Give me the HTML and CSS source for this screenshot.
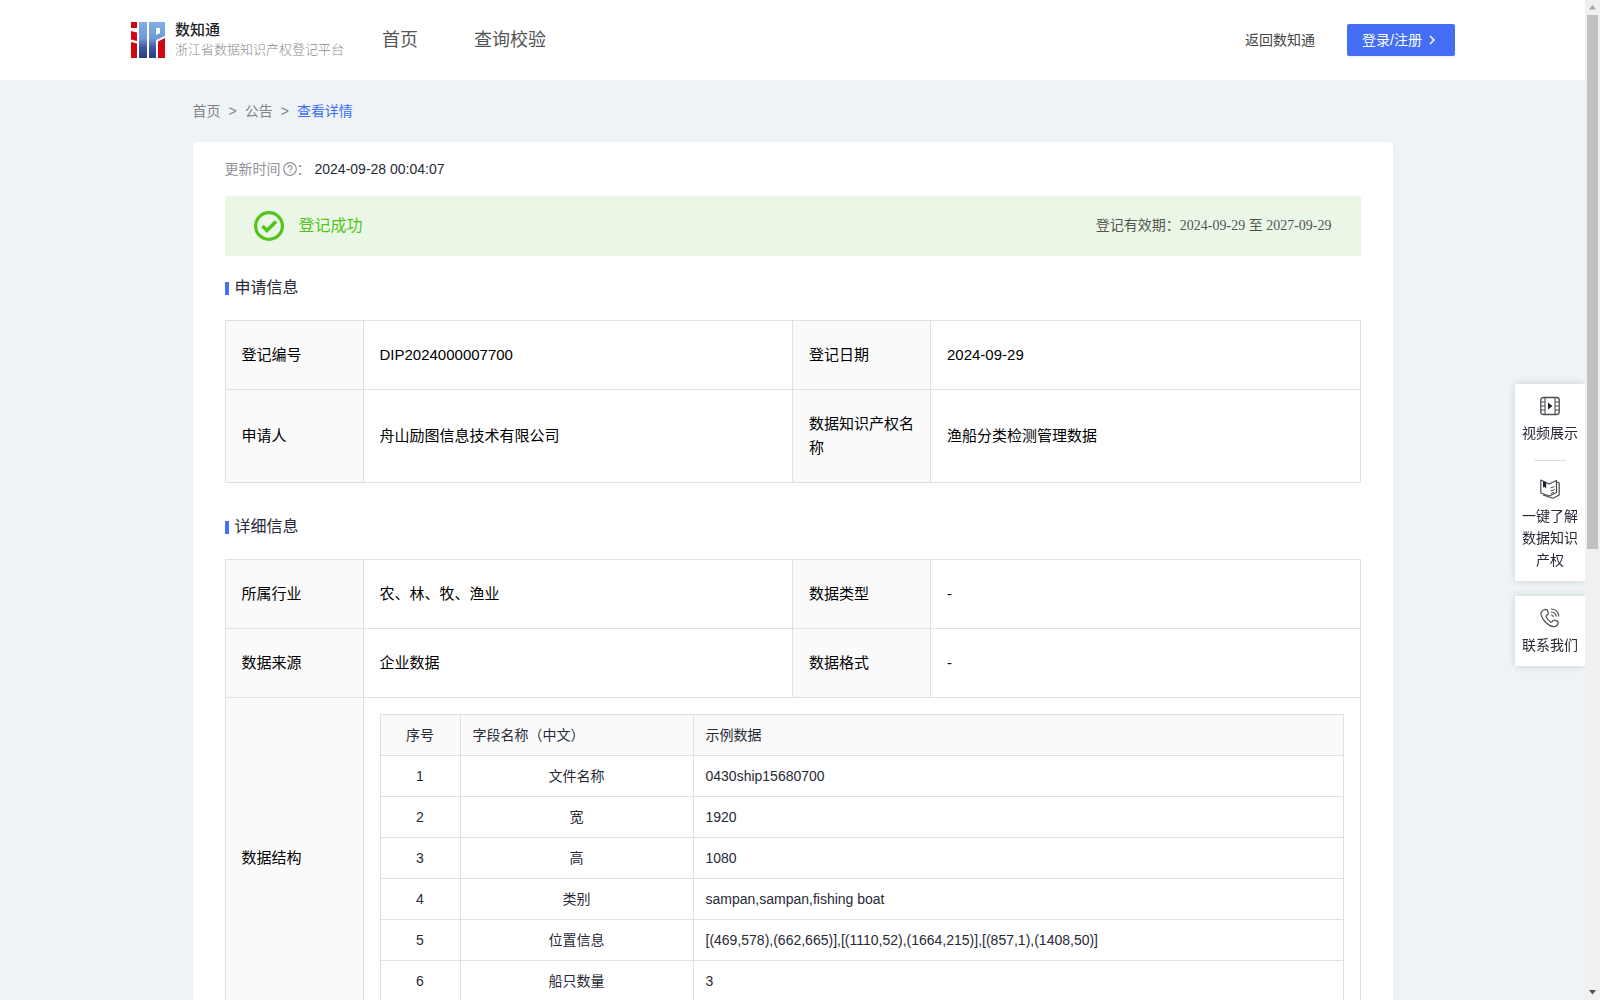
FILE: index.html
```html
<!DOCTYPE html>
<html lang="zh-CN">
<head>
<meta charset="utf-8">
<title>查看详情 - 数知通</title>
<link rel="stylesheet" href="styles.css">
</head>
<body>
<div class="page">
  <header class="header">
    <a class="brand" href="#">
      <svg class="brand-logo" width="34" height="36" viewBox="0 0 34 36" aria-hidden="true">
        <defs>
          <linearGradient id="sky" gradientUnits="userSpaceOnUse" x1="0" y1="0" x2="0" y2="36">
            <stop offset="0" stop-color="#7fb0e6"/>
            <stop offset=".45" stop-color="#6f9bd8"/>
            <stop offset=".7" stop-color="#3f5ba6"/>
            <stop offset="1" stop-color="#283a86"/>
          </linearGradient>
        </defs>
        <path fill="#d00610" d="M0 0h6v6H0zM0 9l6 1.500V19L0 17.500zM0 20l6 1.500V36H0z"/>
        <path fill="url(#sky)" d="M8 0h8v36H8z"/>
        <path fill="url(#sky)" d="M18 0h16v14l-9 4v18h-7zM25 6v7l4-2V6z" fill-rule="evenodd"/>
        <path fill="#d00610" d="M27 19.500L34 16v20h-7z"/>
      </svg>
      <span class="brand-text">
        <strong class="brand-name">数知通</strong>
        <span class="brand-sub">浙江省数据知识产权登记平台</span>
      </span>
    </a>
    <nav class="nav">
      <a href="#">首页</a>
      <a href="#">查询校验</a>
    </nav>
    <div class="header-actions">
      <a class="back-link" href="#">返回数知通</a>
      <button class="login" type="button">登录/注册
        <svg width="8" height="10" viewBox="0 0 8 10" aria-hidden="true"><path d="M2 1l4 4-4 4" fill="none" stroke="#fff" stroke-width="1.500"/></svg>
      </button>
    </div>
  </header>

  <main class="main">
    <nav class="crumbs" aria-label="面包屑">
      <a href="#">首页</a><span>&gt;</span><a href="#">公告</a><span>&gt;</span><a class="current" href="#">查看详情</a>
    </nav>

    <article class="card">
      <div class="updated">
        <span class="muted">更新时间</span>
        <svg width="14" height="14" viewBox="0 0 14 14" aria-hidden="true"><g fill="none" stroke="#909399"><circle cx="7" cy="7" r="6.300" stroke-width="1.200"/><path d="M5 5.700a2 1.900 0 1 1 3 1.500q-1 .5-1 1.300" stroke-width="1.200"/></g><circle cx="7" cy="10.200" r=".8" fill="#909399"/></svg>
        <span class="muted colon">：</span>
        <time>2024-09-28 00:04:07</time>
      </div>

      <div class="banner">
        <svg width="30" height="30" viewBox="0 0 30 30" aria-hidden="true"><g fill="none" stroke="#52c41a"><circle cx="15" cy="15" r="13.400" stroke-width="3.200"/><path d="M8.500 15l4.500 4.500 9-9" stroke-width="3.600"/></g></svg>
        <span class="banner-status">登记成功</span>
        <span class="banner-period">登记有效期：2024-09-29 至 2027-09-29</span>
      </div>

      <section>
        <h2 class="section-title">申请信息</h2>
        <table class="info">
          <colgroup><col class="col-label"><col><col class="col-label"><col></colgroup>
          <tbody>
            <tr><th scope="row">登记编号</th><td>DIP2024000007700</td><th scope="row">登记日期</th><td>2024-09-29</td></tr>
            <tr><th scope="row">申请人</th><td>舟山励图信息技术有限公司</td><th scope="row">数据知识产权名称</th><td>渔船分类检测管理数据</td></tr>
          </tbody>
        </table>
      </section>

      <section class="section-next">
        <h2 class="section-title">详细信息</h2>
        <table class="info">
          <colgroup><col class="col-label"><col><col class="col-label"><col></colgroup>
          <tbody>
            <tr><th scope="row">所属行业</th><td>农、林、牧、渔业</td><th scope="row">数据类型</th><td>-</td></tr>
            <tr><th scope="row">数据来源</th><td>企业数据</td><th scope="row">数据格式</th><td>-</td></tr>
            <tr>
              <th scope="row">数据结构</th>
              <td class="nested" colspan="3">
                <table class="fields">
                  <colgroup><col class="col-index"><col class="col-name"><col></colgroup>
                  <thead>
                    <tr><th class="center" scope="col">序号</th><th scope="col">字段名称（中文）</th><th scope="col">示例数据</th></tr>
                  </thead>
                  <tbody>
                    <tr><td class="center">1</td><td class="center">文件名称</td><td>0430ship15680700</td></tr>
                    <tr><td class="center">2</td><td class="center">宽</td><td>1920</td></tr>
                    <tr><td class="center">3</td><td class="center">高</td><td>1080</td></tr>
                    <tr><td class="center">4</td><td class="center">类别</td><td>sampan,sampan,fishing boat</td></tr>
                    <tr><td class="center">5</td><td class="center">位置信息</td><td>[(469,578),(662,665)],[(1110,52),(1664,215)],[(857,1),(1408,50)]</td></tr>
                    <tr><td class="center">6</td><td class="center">船只数量</td><td>3</td></tr>
                  </tbody>
                </table>
              </td>
            </tr>
          </tbody>
        </table>
      </section>
    </article>
  </main>
</div>

<aside class="side">
  <div class="side-box">
    <a class="side-item" href="#">
      <svg width="20" height="20" viewBox="0 0 20 20" fill="none" stroke="#4a4c55" aria-hidden="true"><rect x=".8" y="1.500" width="18.400" height="17" rx="2.500" stroke-width="1.300"/><path d="M5 1.500v17M15 1.500v17M1 6h4M1 10h4M1 14h4M15 6h4M15 10h4M15 14h4" stroke-width="1.100"/><path d="M8 6.500v7l4.500-3.500z" fill="#20222c" stroke="none"/></svg>
      视频展示
    </a>
    <hr class="side-rule">
    <a class="side-item" href="#">
      <svg width="20" height="20" viewBox="0 0 20 20" fill="none" stroke="#4a4c55" stroke-width="1.200" stroke-linejoin="round" aria-hidden="true"><path d="M.8 1l8.200 4 7.500-3.500v12L9.500 17 .8 14z"/><path d="M17 3l2.200 1v12L13 19.200 3 16"/><path d="M10.500 9l4-1.500M10.500 12l4-1.500M11 14.500l3-1.200" stroke-width="1"/><path d="M3 2l3.200 1.500v6L4.600 8 3 8.400z" fill="#20222c" stroke="none"/></svg>
      一键了解数据知识产权
    </a>
  </div>
  <div class="side-box">
    <a class="side-item" href="#">
      <svg width="20" height="20" viewBox="0 0 20 20" fill="none" stroke="#4a4c55" stroke-width="1.200" stroke-linecap="round" stroke-linejoin="round" aria-hidden="true"><path d="M3.500 2L6 1.300q1.300 0 1.700 1.500l.5 2.400q.1 1-.8 1.600l-1 .8q-.6.600-.1 1.600 1.500 3 4.400 4.700.9.500 1.500-.3l1-1.200q.6-.6 1.500-.3l2.400 1q1.300.7.900 2.200-.6 2.800-3.500 3.300Q10 19 5 13.500.5 8.500 1 4.800 1.500 2.700 3.500 2z"/><path d="M11.500 1q6.500.4 7.300 7M11.500 4q4 .3 4.700 4.200M11.500 7q1.500.2 1.800 1.600"/></svg>
      联系我们
    </a>
  </div>
</aside>

<div class="scrollbar" aria-hidden="true">
  <svg width="7" height="5" viewBox="0 0 7 5"><path d="M0 4.500L3.500 0 7 4.500z" fill="#a3a3a3"/></svg>
  <div class="scroll-track"><div class="scroll-thumb"></div></div>
  <svg width="7" height="5" viewBox="0 0 7 5"><path d="M0 0h7L3.500 4.500z" fill="#505050"/></svg>
</div>
</body>
</html>
```
FILE: styles.css
```css
* { box-sizing: border-box; }

body {
  margin: 0;
  height: 100vh;
  display: flex;
  overflow: hidden;
  background: #eef3f6;
  color: #272a36;
  font: 14px/22px "Liberation Sans", "Noto Sans CJK SC", sans-serif;
}

a { color: inherit; text-decoration: none; }
svg { display: block; flex: none; }

.page {
  flex: 1;
  min-width: 0;
  overflow-y: auto;
  scrollbar-width: none;
}

/* Header */
.header {
  display: flex;
  align-items: center;
  height: 80px;
  padding: 0 130px 0 131px;
  background: #fff;
}
.brand { display: flex; align-items: center; gap: 10px; }
.brand-text { display: flex; flex-direction: column; }
.brand-name { font-size: 15px; line-height: 20px; font-weight: 500; color: #222; }
.brand-sub { font-size: 13px; line-height: 20px; font-weight: 300; color: #8c8c8c; }
.nav { display: flex; gap: 56px; margin-left: 38px; font-size: 18px; color: #555; }
.header-actions { display: flex; align-items: center; gap: 32px; margin-left: auto; color: #444; }
.login {
  display: flex;
  align-items: center;
  gap: 6px;
  height: 32px;
  padding: 0 19px 0 15px;
  border: 0;
  border-radius: 2px;
  background: #446ef4;
  box-shadow: 0 2px 0 rgba(0, 0, 0, .04);
  color: #fff;
  font: inherit;
}

/* Content */
.main { max-width: 1200px; margin: 0 auto; padding-bottom: 40px; }
.crumbs { display: flex; gap: 8px; padding: 20px 0; color: #808388; }
.crumbs .current { color: #3f6df5; }

.card { padding: 16px 32px 32px; border-radius: 4px; background: #fff; }
.updated { display: flex; align-items: center; height: 22px; }
.updated svg { margin-left: 2px; }
.muted { color: #909399; }
.colon { width: 18px; }

.banner {
  display: flex;
  align-items: center;
  height: 60px;
  margin: 16px 0 20px;
  padding: 0 29px;
  background: #ebf7e6;
}
.banner-status { margin-left: 15px; font-size: 16px; color: #52c41a; }
.banner-period { margin-left: auto; color: #555; font-family: "Liberation Serif", "Noto Sans CJK SC", serif; }

.section-next { margin-top: 32px; }
.section-title {
  display: flex;
  align-items: center;
  gap: 6px;
  margin: 0 0 20px;
  font-size: 16px;
  line-height: 24px;
  font-weight: 400;
}
.section-title::before { content: ""; width: 4px; height: 13px; background: #446ef4; }

table { width: 100%; border-collapse: collapse; table-layout: fixed; }
th, td { border: 1px solid #e0e0e0; text-align: left; font-weight: 400; }
th { background: #fafafa; }
.info { color: #000; font-size: 15px; line-height: 24px; }
.info th, .info td { padding: 22px 16px; }
.info .nested { padding: 16px; }
.col-label { width: 138px; }

.fields { color: #272a36; font-size: 14px; line-height: 24px; }
.info .fields th, .info .fields td { padding: 8px 12px; }
.info .fields .center { text-align: center; }
.col-index { width: 80px; }
.col-name { width: 233px; }

/* Floating shortcuts */
.side {
  position: fixed;
  top: 384px;
  right: 15px;
  width: 70px;
  display: flex;
  flex-direction: column;
  gap: 15px;
}
.side-box { padding: 12px 7px 10px; background: #fff; box-shadow: 0 0 8px rgba(0, 0, 0, .14); }
.side-item { display: flex; flex-direction: column; align-items: center; gap: 6px; text-align: center; }
.side-rule { width: 32px; margin: 16px auto 18px; border: 0; border-top: 1px solid #ddd; }

/* Scrollbar */
.scrollbar {
  position: relative;
  width: 15px;
  display: flex;
  flex-direction: column;
  align-items: center;
  gap: 5px;
  padding: 5px 0;
  background: #f0f0f0;
}
.scroll-track { flex: 1; width: 11px; }
.scroll-thumb { height: 55%; background: #c1c1c1; }
```
